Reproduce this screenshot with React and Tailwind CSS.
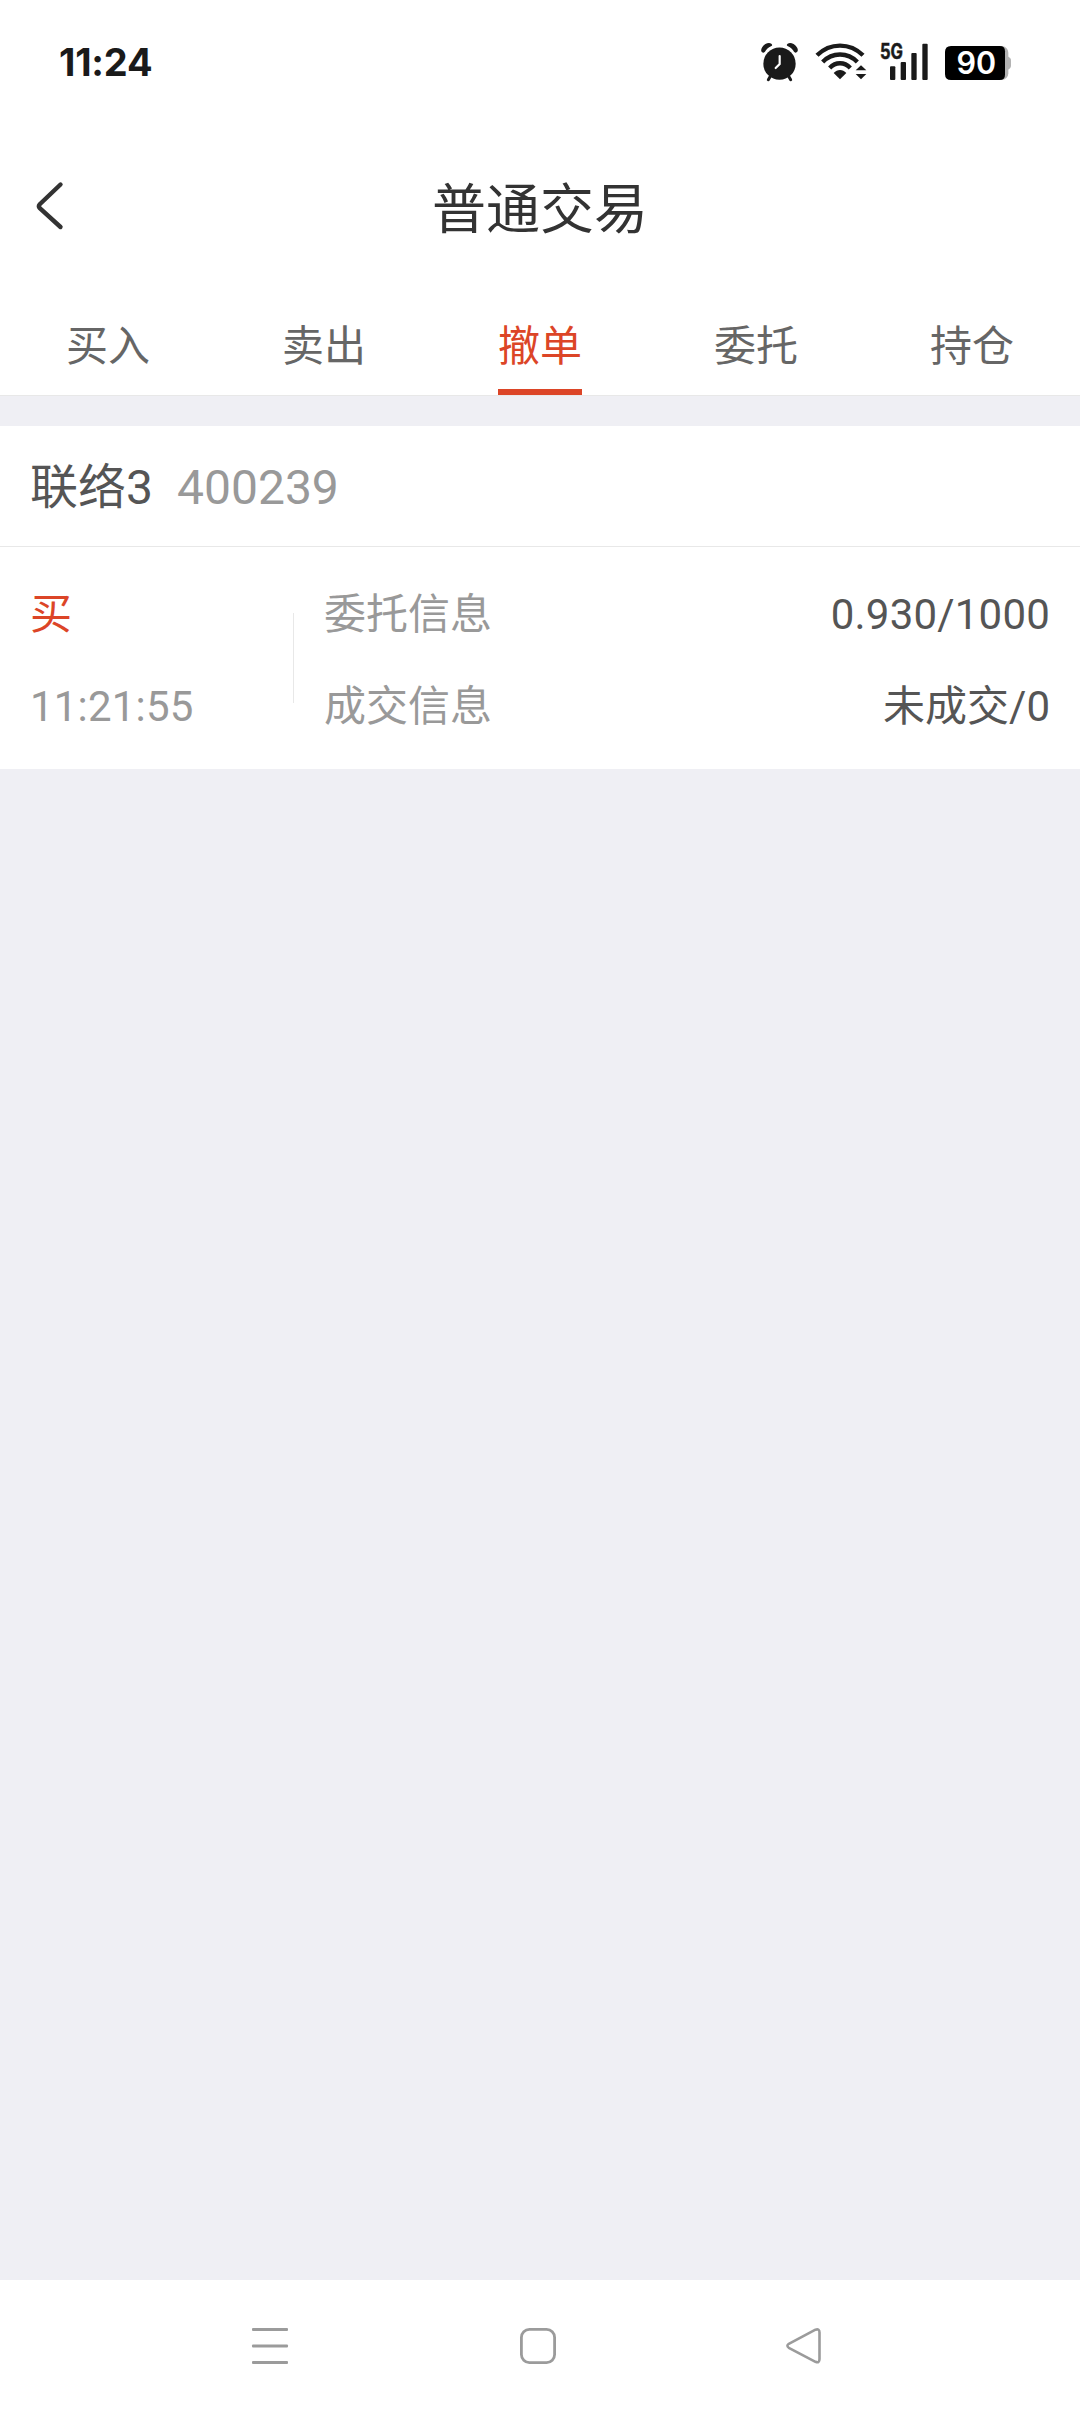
import clsx from "clsx";

const tabs = ["买入", "卖出", "撤单", "委托", "持仓"];

const orders = [
  {
    name: "联络3",
    code: "400239",
    side: "买",
    time: "11:21:55",
    entrust: "0.930/1000",
    deal: "未成交/0",
  },
];

function AlarmIcon() {
  return (
    <svg className="w-[39px] h-10" viewBox="60 66 117 120" fill="#1a1a1a">
      <circle cx="118.500" cy="131" r="48.500" />
      <path d="M71 98 C63 97 61 90 67 81 C74 71 86 66 94 71 C98 74 97 77 93 79 C85 83 79 88 75 95 Z" />
      <path d="M166 98 C174 97 176 90 170 81 C163 71 151 66 143 71 C139 74 140 77 144 79 C152 83 158 88 162 95 Z" />
      <path d="M91 169 L85 179 M146 169 L152 179" stroke="#1a1a1a" strokeWidth="9" strokeLinecap="round" />
      <path d="M119 108 V132 L107 144" fill="none" stroke="#fff" strokeWidth="6.500" strokeLinecap="round" />
    </svg>
  );
}

function WifiIcon() {
  return (
    <svg className="w-[52px] h-10" viewBox="225 66 156 120" fill="#1a1a1a">
      <g fill="none" stroke="#1a1a1a" strokeWidth="13">
        <path d="M231 106 C270 67 330 67 369 106" />
        <path d="M248 126 C277 96 323 96 352 126" />
        <path d="M269 144 C287 125 313 125 331 144" />
      </g>
      <path d="M281 159 C292 147 308 147 319 159 L300 178 Z" />
      <path d="M347 151 L363 136 L379 151 Z" />
      <path d="M347 162 L363 178 L379 162 Z" />
    </svg>
  );
}

function SignalIcon() {
  return (
    <svg className="w-[50px] h-10 overflow-visible" viewBox="420 66 150 120" fill="#1a1a1a">
      <text
        x="420"
        y="116"
        textLength="69"
        lengthAdjust="spacingAndGlyphs"
        stroke="#1a1a1a"
        strokeWidth="1.500"
        className="font-['Inter',sans-serif] text-[63px] font-bold"
      >
        5G
      </text>
      <rect x="450" y="139" width="16" height="41" rx="3" />
      <rect x="482" y="126" width="16" height="54" rx="3" />
      <rect x="514" y="99" width="16" height="81" rx="3" />
      <rect x="547" y="71" width="16" height="109" rx="3" />
    </svg>
  );
}

function BatteryIcon() {
  return (
    <svg className="w-[66px] h-10" viewBox="615 66 198 120">
      <rect x="700" y="78" width="105" height="102" rx="20" fill="#b3b3b3" />
      <path d="M800 108 C810 112 813 115 813 121 V137 C813 143 810 146 800 150 Z" fill="#b3b3b3" />
      <path d="M633 78 H779 Q795 78 795 94 V164 Q795 180 779 180 H633 Q615 180 615 162 V96 Q615 78 633 78 Z" fill="#000" />
      <text
        x="709"
        y="163"
        textAnchor="middle"
        textLength="119"
        lengthAdjust="spacingAndGlyphs"
        className="font-['Inter',sans-serif] text-[92px] font-semibold"
        fill="#fff"
      >
        90
      </text>
    </svg>
  );
}

function StatusBar() {
  return (
    <div className="flex h-[124px] items-center justify-between pl-[59px] pr-[69px]">
      <span className="font-['Inter',sans-serif] text-[38px] font-bold leading-none tracking-[-0.2px] text-[#1a1a1a]">
        11:24
      </span>
      <div className="flex items-center">
        <AlarmIcon />
        <span className="w-4" />
        <WifiIcon />
        <span className="w-[13px]" />
        <SignalIcon />
        <span className="w-[15px]" />
        <BatteryIcon />
      </div>
    </div>
  );
}

function Header() {
  return (
    <header className="grid h-[164px] grid-cols-[1fr_auto_1fr] items-center">
      <button className="ml-[35px] w-[30px]">
        <svg className="h-[52px] w-[30px]" viewBox="0 0 30 52" fill="none">
          <path
            d="M25.500 4.500 L4.800 24.200 Q3 26.200 4.800 28.200 L25.500 47"
            stroke="#333"
            strokeWidth="4.400"
            strokeLinecap="round"
          />
        </svg>
      </button>
      <h1 className="pt-2.5 text-[54px] leading-none text-[#333]">普通交易</h1>
    </header>
  );
}

function Tabs({ active }) {
  return (
    <div className="grid h-[107px] grid-cols-5">
      {tabs.map((tab) => (
        <div key={tab} className="flex justify-center">
          <div
            className={clsx(
              "h-[107px] border-b-[6px] pt-[38px] text-[42px] leading-[42px]",
              tab === active
                ? "border-[#dc4527] text-[#dc4527]"
                : "border-transparent text-[#666]"
            )}
          >
            {tab}
          </div>
        </div>
      ))}
    </div>
  );
}

function OrderCard({ order }) {
  return (
    <div className="bg-white text-[42px] leading-[92px]">
      <div className="flex h-[121px] items-center gap-6 border-b border-[#e8e8e8] px-[30px] pt-1 text-[48px] leading-none">
        <span className="text-[#555]">{order.name}</span>
        <span className="text-[#999]">{order.code}</span>
      </div>
      <div className="flex h-[222px] items-center px-[30px]">
        <div className="w-[263px] pt-1.5">
          <p className="text-[#dc4527]">{order.side}</p>
          <p className="tracking-[0.2px] text-[#999]">{order.time}</p>
        </div>
        <div className="h-[90px] w-px bg-[#e8e8e8]" />
        <div className="flex-1 pl-[30px] pt-1.5">
          <div className="flex justify-between">
            <span className="text-[#999]">委托信息</span>
            <span className="tracking-[0.2px] text-[#555]">{order.entrust}</span>
          </div>
          <div className="flex justify-between">
            <span className="text-[#999]">成交信息</span>
            <span className="text-[#555]">{order.deal}</span>
          </div>
        </div>
      </div>
    </div>
  );
}

function NavBar() {
  return (
    <nav className="flex h-[132px] items-center bg-white pl-[250px]">
      <svg className="size-10" viewBox="0 0 40 40" fill="#9b9b9b">
        <rect x="2" y="2" width="36" height="3" rx="1" />
        <rect x="2" y="18.500" width="36" height="3" rx="1" />
        <rect x="2" y="35" width="36" height="3" rx="1" />
      </svg>
      <svg className="ml-[228px] size-10" viewBox="0 0 40 40" fill="none">
        <rect x="3.400" y="3.400" width="33.200" height="33.200" rx="8" stroke="#9b9b9b" strokeWidth="2.800" />
      </svg>
      <svg className="ml-[226px] size-10" viewBox="0 0 40 40" fill="none">
        <path
          d="M4.800 17.800 L31.500 3.700 Q35.500 2.500 35.500 6.500 V33 Q35.500 37.500 31.500 35.800 L4.800 21.800 Q2 19.800 4.800 17.800 Z"
          stroke="#9b9b9b"
          strokeWidth="2.600"
          strokeLinejoin="round"
        />
      </svg>
    </nav>
  );
}

export default function App() {
  return (
    <div className="flex h-[2412px] w-[1080px] flex-col bg-[#efeff4] font-['Roboto','Noto_Sans_CJK_SC',sans-serif]">
      <div className="bg-white">
        <StatusBar />
        <Header />
        <Tabs active="撤单" />
      </div>
      <div className="mb-[30px] h-px bg-[#e8e8e8]" />
      <main className="flex-1">
        {orders.map((order) => (
          <OrderCard key={order.time} order={order} />
        ))}
      </main>
      <NavBar />
    </div>
  );
}
